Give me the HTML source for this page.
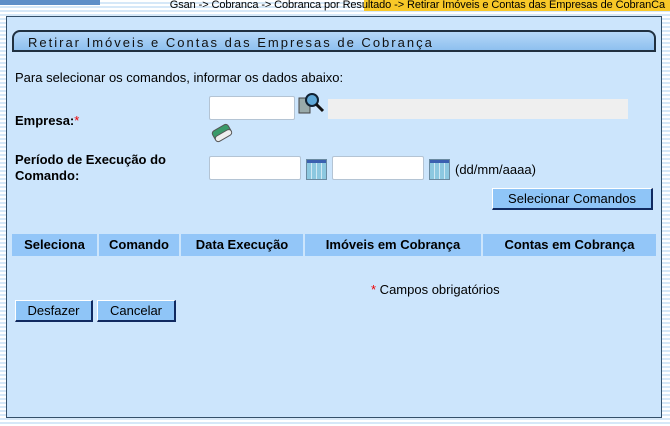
<!DOCTYPE html>
<html><head><meta charset="utf-8"><style>
*{margin:0;padding:0;box-sizing:border-box}
body{width:670px;height:426px;overflow:hidden;font-family:"Liberation Sans",sans-serif;font-size:13px;color:#000;
background:repeating-linear-gradient(#fff 0 2px,#d6e8f8 2px 4px);position:relative}
.a{position:absolute}
#panel{left:6px;top:16px;width:656px;height:402px;background:#cce5fc;border:1px solid #34506a}
.crumb{right:5px;top:-1px;font-size:11px;white-space:nowrap;letter-spacing:-0.1px}
.title{left:12px;top:30px;width:644px;height:22px;border:2px solid #203040;border-radius:8px 8px 0 0;
background:linear-gradient(#b6d8f8,#8ec0ef);font-size:13px;letter-spacing:2px;padding:3px 0 0 14px;color:#111}
.in{background:#fff;border:1px solid #b4c4d4;border-radius:2px;height:24px}
.btn{background:#8fc5f7;border:1px solid #fff;border-right-color:#102a60;border-bottom-color:#102a60;border-width:1px 2px 2px 1px;font-size:13px;text-align:center;line-height:19px;height:22px}
b{font-weight:bold}
.th{top:234px;height:22px;background:#93c6f8;font-weight:bold;text-align:center;line-height:22px;border-right:2px solid #cce5fc}
.cal{width:21px;height:21px;border:1px solid #6a8aa0;
background:linear-gradient(#3a60b0 0 3px,transparent 3px),repeating-linear-gradient(90deg,#8cc8e0 0 4px,#cfe8f4 4px 5px);}
</style></head><body>
<div class="a" style="left:0;top:0;width:100px;height:5px;background:#5f8fc8"></div>
<div class="a" style="left:364px;top:0;width:306px;height:11px;background:#f8c828"></div>
<div class="a crumb">Gsan -&gt; Cobranca -&gt; Cobranca por Resultado -&gt; Retirar Imóveis e Contas das Empresas de CobranCa</div>
<div class="a" id="panel"></div>
<div class="a title">Retirar Imóveis e Contas das Empresas de Cobrança</div>
<div class="a" style="left:15px;top:70px">Para selecionar os comandos, informar os dados abaixo:</div>
<div class="a" style="left:15px;top:113px"><b>Empresa:</b><span style="color:#e00">*</span></div>
<div class="a in" style="left:209px;top:96px;width:86px"></div>
<svg class="a" style="left:298px;top:92px" width="28" height="24"><rect x="1" y="6" width="11" height="15" fill="#9aa" stroke="#444"/><circle cx="14" cy="8" r="6" fill="#5fa8d8" stroke="#123" stroke-width="2"/><line x1="18" y1="12" x2="25" y2="19" stroke="#111" stroke-width="3"/></svg>
<div class="a" style="left:328px;top:99px;width:300px;height:20px;background:#efefef"></div>
<svg class="a" style="left:210px;top:122px" width="24" height="22"><g transform="rotate(-30 12 11)"><rect x="3" y="5" width="18" height="11" rx="3" fill="#3a9a6a" stroke="#555"/><rect x="3" y="11" width="18" height="6" rx="3" fill="#eee" stroke="#555"/></g></svg>
<div class="a" style="left:15px;top:152px;font-weight:bold;line-height:16px">Período de Execução do<br>Comando:</div>
<div class="a in" style="left:209px;top:156px;width:92px"></div>
<div class="a cal" style="left:306px;top:159px"></div>
<div class="a in" style="left:332px;top:156px;width:92px"></div>
<div class="a cal" style="left:429px;top:159px"></div>
<div class="a" style="left:455px;top:162px">(dd/mm/aaaa)</div>
<div class="a btn" style="left:492px;top:188px;width:161px">Selecionar Comandos</div>
<div class="a th" style="left:12px;width:87px">Seleciona</div>
<div class="a th" style="left:99px;width:82px">Comando</div>
<div class="a th" style="left:181px;width:124px">Data Execução</div>
<div class="a th" style="left:305px;width:178px">Imóveis em Cobrança</div>
<div class="a th" style="left:483px;width:173px;border-right:0">Contas em Cobrança</div>
<div class="a" style="left:371px;top:282px"><span style="color:#e00">*</span> Campos obrigatórios</div>
<div class="a btn" style="left:15px;top:300px;width:78px">Desfazer</div>
<div class="a btn" style="left:97px;top:300px;width:79px">Cancelar</div>
</body></html>
